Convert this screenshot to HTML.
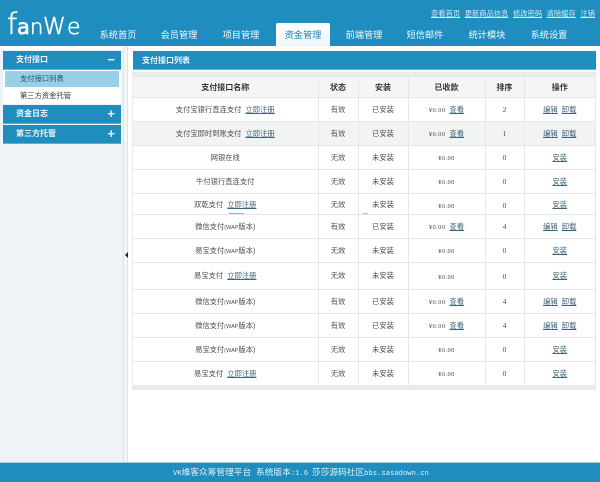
<!DOCTYPE html>
<html lang="zh"><head><meta charset="utf-8"><title>支付接口列表</title>
<style>
html,body{margin:0;padding:0}
body{width:600px;height:482px;position:relative;overflow:hidden;background:#fff;font:7.3px "Liberation Sans","WenQuanYi Zen Hei","Noto Sans CJK SC",sans-serif;color:#444;filter:blur(.25px)}
div,a,span{position:absolute;white-space:nowrap}
td a,td span{position:static}
td a{text-decoration:underline;color:#3d6379}
#hd{left:0;top:0;width:600px;height:46px;background:#1f8ebf}
.nav{top:28px;width:70px;text-align:center;color:#f2fafd;font-size:9.2px;line-height:14px}
#act{left:276px;top:23px;width:54px;height:23px;background:linear-gradient(#fff,#eef6fa);border-radius:2px 2px 0 0;color:#1f7fae;font-size:9.2px;line-height:25px;text-align:center}
#top{left:431px;top:9px;color:#d5ecf5;font-size:7.3px;line-height:10px}
#top a{position:static;color:#d5ecf5;text-decoration:underline;margin-right:4.5px}
#sb{left:0;top:46px;width:123px;height:416px;background:#eef3f7;border-top:4px solid #fff;box-sizing:border-box}
#sp{left:123px;top:46px;width:5px;height:416px;background:#f4f6f8;border-left:1px solid #dce3e8;border-right:1px solid #dce3e8;box-sizing:border-box}
.sh{left:3px;width:118px;height:18px;background:#1f8ebf;color:#f0f9fc;font-size:8px;font-weight:bold;line-height:18px;text-indent:13px;border-bottom:1px solid #5fb0d4}
.sh b{position:absolute;right:6px;top:0;text-indent:0;font:bold 13px/18px "Liberation Sans",sans-serif;color:#e8f5fa}
#sl{left:3px;top:70px;width:118px;height:34px;background:#fff}
#sa{left:2px;top:1px;width:114px;height:16px;background:#97d0e8;color:#24506a;line-height:16px;text-indent:15px}
#sb2{left:0;top:18px;width:118px;height:16px;line-height:16px;text-indent:17px;color:#333}
#tt{left:133px;top:51px;width:463px;height:18px;background:#1f8ebf;color:#f0f9fc;font-size:8px;font-weight:bold;line-height:19px;text-indent:9px;border-bottom:1px solid #6db6d7}
#band{left:132px;top:72px;width:464px;height:318px;background:#e9ecee}
table{position:absolute;left:133px;top:76px;width:463px;height:309px;border-collapse:collapse;table-layout:fixed;background:#fff}
td,th{border:1px solid #e5e8ea;padding:0;text-align:center;font-size:7.3px;font-weight:normal;color:#4c4c4c;overflow:hidden;white-space:nowrap}
th{background:#f4f5f6;font-weight:bold;color:#333;font-size:8px}
tr.g td{background:#f2f3f3}
td:first-child,th:first-child{border-left:0}
tr.cut td{border-top-color:#d5dde2}
tr.s td{padding-top:2px}
.m{font:6.5px "Liberation Serif",serif;letter-spacing:.4px}
td.n{font:7.5px "Liberation Serif",serif}
.w{font:5.5px "Liberation Sans",sans-serif}
.ft{top:463px;color:#e0f1f7;font:8.7px/18px "WenQuanYi Zen Hei","Noto Sans CJK SC",sans-serif}
.ft i{font:normal 7.2px "Liberation Mono",monospace}
#f{left:0;top:462px;width:600px;height:20px;background:#1f8ebf;border-top:1px solid #a9d3e5;box-sizing:border-box}
</style></head>
<body>
<div id="hd"></div>
<svg style="position:absolute;left:0;top:0" width="100" height="46" font-family="DejaVu Sans" font-weight="200" fill="#fff" stroke="#fff" stroke-width=".6"><text y="34" font-size="29" x="7">f</text><text y="34" font-size="21" x="17" font-weight="400">a</text><text y="34" font-size="21" x="30">n</text><text y="34" font-size="23" x="43">W</text><text y="34" font-size="22" x="67">e</text></svg>
<div class="nav" style="left:83px">系统首页</div>
<div class="nav" style="left:144px">会员管理</div>
<div class="nav" style="left:206px">项目管理</div>
<div id="act">资金管理</div>
<div class="nav" style="left:329px">前端管理</div>
<div class="nav" style="left:390px">短信邮件</div>
<div class="nav" style="left:452px">统计模块</div>
<div class="nav" style="left:514px">系统设置</div>
<div id="top"><a href="#">查看首页</a><a href="#">更新商品信息</a><a href="#">修改密码</a><a href="#">清除缓存</a><a href="#">注销</a></div>

<div id="sb"></div><div id="sp"></div>
<div style="left:125px;top:252px;width:0;height:0;border:3px solid transparent;border-right-color:#222;border-left:0"></div>
<div class="sh" style="top:51px">支付接口<b>−</b></div>
<div id="sl"><div id="sa">支付接口列表</div><div id="sb2">第三方资金托管</div></div>
<div class="sh" style="top:105px">资金日志<b>+</b></div>
<div class="sh" style="top:125px">第三方托管<b>+</b></div>

<div id="tt">支付接口列表</div>
<div id="band"></div>
<table>
<colgroup><col style="width:185px"><col style="width:40px"><col style="width:50px"><col style="width:77px"><col style="width:39px"><col></colgroup>
<tr style="height:21px"><th>支付接口名称</th><th>状态</th><th>安装</th><th>已收款</th><th>排序</th><th>操作</th></tr>
<tr style="height:24px"><td>支付宝银行直连支付&nbsp; <a href="#">立即注册</a></td><td>有效</td><td>已安装</td><td><span class="m">¥0.00</span>&nbsp; <a href="#">查看</a></td><td class="n">2</td><td><a href="#">编辑</a>&nbsp; <a href="#">卸载</a></td></tr>
<tr class="g" style="height:24px"><td>支付宝即时到账支付&nbsp; <a href="#">立即注册</a></td><td>有效</td><td>已安装</td><td><span class="m">¥0.00</span>&nbsp; <a href="#">查看</a></td><td class="n">1</td><td><a href="#">编辑</a>&nbsp; <a href="#">卸载</a></td></tr>
<tr style="height:24px"><td>网银在线</td><td>无效</td><td>未安装</td><td><span class="m">¥0.00</span></td><td class="n">0</td><td><a href="#">安装</a></td></tr>
<tr style="height:24px"><td>牛付银行直连支付</td><td>无效</td><td>未安装</td><td><span class="m">¥0.00</span></td><td class="n">0</td><td><a href="#">安装</a></td></tr>
<tr class="s" style="height:21px"><td>双乾支付&nbsp; <a href="#">立即注册</a></td><td>无效</td><td>未安装</td><td><span class="m">¥0.00</span></td><td class="n">0</td><td><a href="#">安装</a></td></tr>
<tr class="cut" style="height:24px"><td>微信支付<span class="w">(WAP</span>版本)</td><td>有效</td><td>已安装</td><td><span class="m">¥0.00</span>&nbsp; <a href="#">查看</a></td><td class="n">4</td><td><a href="#">编辑</a>&nbsp; <a href="#">卸载</a></td></tr>
<tr style="height:24px"><td>易宝支付<span class="w">(WAP</span>版本)</td><td>无效</td><td>未安装</td><td><span class="m">¥0.00</span></td><td class="n">0</td><td><a href="#">安装</a></td></tr>
<tr style="height:27px"><td>易宝支付&nbsp; <a href="#">立即注册</a></td><td>无效</td><td>未安装</td><td><span class="m">¥0.00</span></td><td class="n">0</td><td><a href="#">安装</a></td></tr>
<tr style="height:24px"><td>微信支付<span class="w">(WAP</span>版本)</td><td>有效</td><td>已安装</td><td><span class="m">¥0.00</span>&nbsp; <a href="#">查看</a></td><td class="n">4</td><td><a href="#">编辑</a>&nbsp; <a href="#">卸载</a></td></tr>
<tr style="height:24px"><td>微信支付<span class="w">(WAP</span>版本)</td><td>有效</td><td>已安装</td><td><span class="m">¥0.00</span>&nbsp; <a href="#">查看</a></td><td class="n">4</td><td><a href="#">编辑</a>&nbsp; <a href="#">卸载</a></td></tr>
<tr style="height:24px"><td>易宝支付<span class="w">(WAP</span>版本)</td><td>无效</td><td>未安装</td><td><span class="m">¥0.00</span></td><td class="n">0</td><td><a href="#">安装</a></td></tr>
<tr style="height:24px"><td>易宝支付&nbsp; <a href="#">立即注册</a></td><td>无效</td><td>未安装</td><td><span class="m">¥0.00</span></td><td class="n">0</td><td><a href="#">安装</a></td></tr>
</table>
<div style="left:229px;top:213px;width:15px;height:1px;background:#8fb5d0"></div>
<div style="left:362px;top:213px;width:6px;height:1px;background:#f0c080"></div>
<div id="f"></div>
<span class="ft" style="left:173px"><i>VK</i>维客众筹管理平台</span>
<span class="ft" style="left:256px">系统版本<i>:1.6</i></span>
<span class="ft" style="left:312px">莎莎源码社区<i>bbs.sasadown.cn</i></span>
</body></html>
